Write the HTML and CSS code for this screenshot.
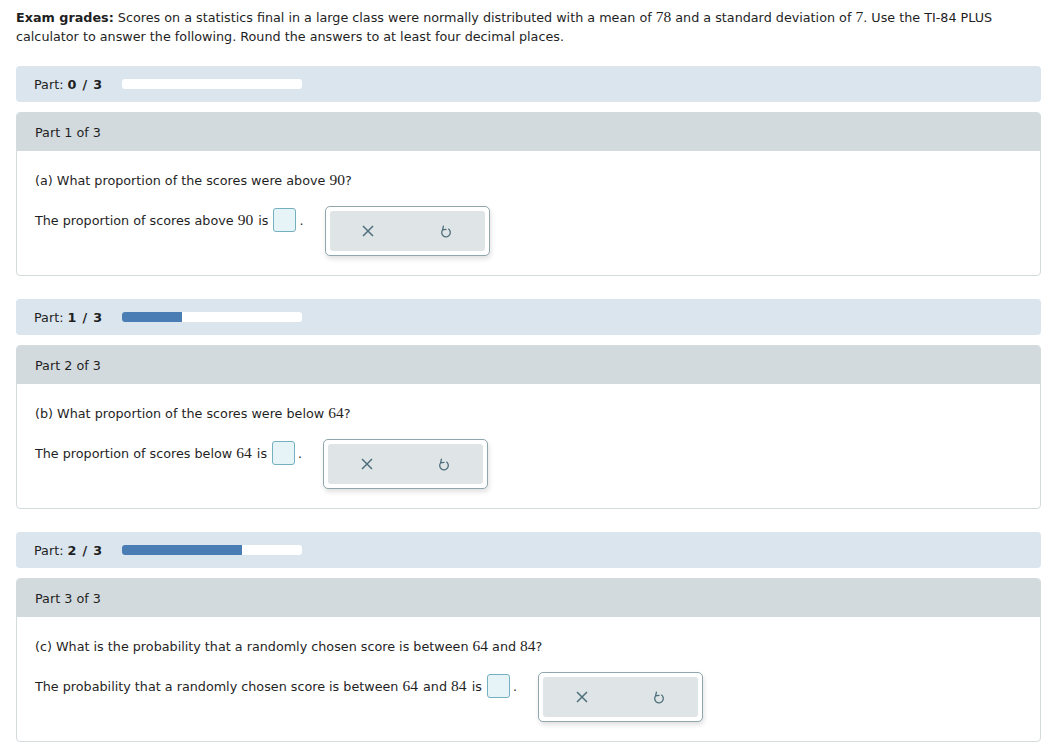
FILE: index.html
```html
<!DOCTYPE html>
<html>
<head>
<meta charset="utf-8">
<link rel="stylesheet" href="styles.css">
</head>
<body>
<div class="page">
  <p class="intro"><b>Exam grades:</b> Scores on a statistics final in a large class were normally distributed with a mean of <span class="m">78</span> and a standard deviation of <span class="m">7</span>. Use the TI-84 PLUS calculator to answer the following. Round the answers to at least four decimal places.</p>

  <div class="progress"><span class="plabel">Part: <b>0 / 3</b></span><div class="track"><div class="fill" style="width:0px"></div></div></div>
  <div class="card">
    <div class="card-head">Part 1 of 3</div>
    <div class="card-body">
      <div class="question">(a) What proportion of the scores were above <span class="m">90</span>?</div>
      <div class="answer">
        <div class="answer-text">The proportion of scores above <span class="m sp">90</span> is <span class="box"></span><span class="dot">.</span></div>
        <div class="tools">
          <div class="tools-inner">
            <span class="tool"><svg width="12" height="12" viewBox="0 0 12 12"><path d="M1 1L11 11M11 1L1 11" stroke="#4e6e7b" stroke-width="1.5" fill="none"/></svg></span>
            <span class="tool"><svg width="12" height="14" viewBox="0 0 12 14"><path d="M3.4 2.2L2.6 5.9L6 5.3M2.6 5.9A4.3 4.3 0 1 0 8.6 5.1" stroke="#4e6e7b" stroke-width="1.3" fill="none" stroke-linecap="round" stroke-linejoin="round"/></svg></span>
          </div>
        </div>
      </div>
    </div>
  </div>

  <div class="progress"><span class="plabel">Part: <b>1 / 3</b></span><div class="track"><div class="fill" style="width:60px"></div></div></div>
  <div class="card">
    <div class="card-head">Part 2 of 3</div>
    <div class="card-body">
      <div class="question">(b) What proportion of the scores were below <span class="m">64</span>?</div>
      <div class="answer">
        <div class="answer-text">The proportion of scores below <span class="m sp">64</span> is <span class="box"></span><span class="dot">.</span></div>
        <div class="tools">
          <div class="tools-inner">
            <span class="tool"><svg width="12" height="12" viewBox="0 0 12 12"><path d="M1 1L11 11M11 1L1 11" stroke="#4e6e7b" stroke-width="1.5" fill="none"/></svg></span>
            <span class="tool"><svg width="12" height="14" viewBox="0 0 12 14"><path d="M3.4 2.2L2.6 5.9L6 5.3M2.6 5.9A4.3 4.3 0 1 0 8.6 5.1" stroke="#4e6e7b" stroke-width="1.3" fill="none" stroke-linecap="round" stroke-linejoin="round"/></svg></span>
          </div>
        </div>
      </div>
    </div>
  </div>

  <div class="progress"><span class="plabel">Part: <b>2 / 3</b></span><div class="track"><div class="fill" style="width:120px"></div></div></div>
  <div class="card">
    <div class="card-head">Part 3 of 3</div>
    <div class="card-body">
      <div class="question">(c) What is the probability that a randomly chosen score is between <span class="m">64</span> and <span class="m">84</span>?</div>
      <div class="answer">
        <div class="answer-text">The probability that a randomly chosen score is between <span class="m sp">64</span> and <span class="m sp">84</span> is <span class="box"></span><span class="dot">.</span></div>
        <div class="tools">
          <div class="tools-inner">
            <span class="tool"><svg width="12" height="12" viewBox="0 0 12 12"><path d="M1 1L11 11M11 1L1 11" stroke="#4e6e7b" stroke-width="1.5" fill="none"/></svg></span>
            <span class="tool"><svg width="12" height="14" viewBox="0 0 12 14"><path d="M3.4 2.2L2.6 5.9L6 5.3M2.6 5.9A4.3 4.3 0 1 0 8.6 5.1" stroke="#4e6e7b" stroke-width="1.3" fill="none" stroke-linecap="round" stroke-linejoin="round"/></svg></span>
          </div>
        </div>
      </div>
    </div>
  </div>
</div>
</body>
</html>
```

FILE: styles.css
```css
html, body {
  margin: 0;
  padding: 0;
  background: #ffffff;
}
body {
  font-family: "DejaVu Sans", Verdana, sans-serif;
  font-size: 12.75px;
  color: #1f1f1f;
}
.page {
  width: 1025px;
  padding: 7px 0 0 16px;
}
.intro {
  margin: 0 0 20px 0;
  line-height: 19px;
  padding-right: 20px;
}
.m {
  font-family: "Liberation Serif", "Times New Roman", serif;
  font-size: 15.5px;
}
.sp { margin-right: 1px; }
.progress {
  height: 36px;
  background: #dae5ee;
  border-radius: 4px;
  display: flex;
  align-items: center;
  padding-left: 18px;
  margin-bottom: 10px;
}
.plabel b { letter-spacing: 0.8px; }
.track {
  margin-left: 19px;
  width: 180px;
  height: 10px;
  background: #ffffff;
  border-radius: 3px;
  overflow: hidden;
}
.fill {
  height: 100%;
  background: #4a7db4;
}
.card {
  border: 1px solid #d3dbdd;
  border-radius: 4px;
  margin-bottom: 23px;
  overflow: hidden;
}
.card-head {
  height: 38px;
  background: #d2dadd;
  display: flex;
  align-items: center;
  padding-left: 18px;
}
.card-body {
  padding: 19px 18px 19px 18px;
}
.question {
  line-height: 19px;
}
.answer {
  display: flex;
  align-items: flex-start;
  margin-top: 16px;
}
.answer-text {
  margin-top: 2px;
  height: 24px;
  display: flex;
  align-items: center;
  white-space: pre;
}
.box {
  display: inline-block;
  width: 21px;
  height: 22px;
  border: 1px solid #74b0c0;
  background: #e6f4f8;
  border-radius: 3px;
  margin-left: 1px;
}
.dot {
  margin-left: 3px;
}
.tools {
  margin-left: 21px;
  border: 1px solid #8fa6ad;
  border-radius: 5px;
  background: #ffffff;
  padding: 4px;
  box-shadow: 1px 3px 5px rgba(0, 0, 0, 0.12);
  box-sizing: border-box;
  width: 165px;
  height: 50px;
}
.tools-inner {
  height: 100%;
  background: #dfe5e7;
  border-radius: 3px;
  display: flex;
}
.tool {
  flex: 1;
  display: flex;
  align-items: center;
  justify-content: center;
}
```
